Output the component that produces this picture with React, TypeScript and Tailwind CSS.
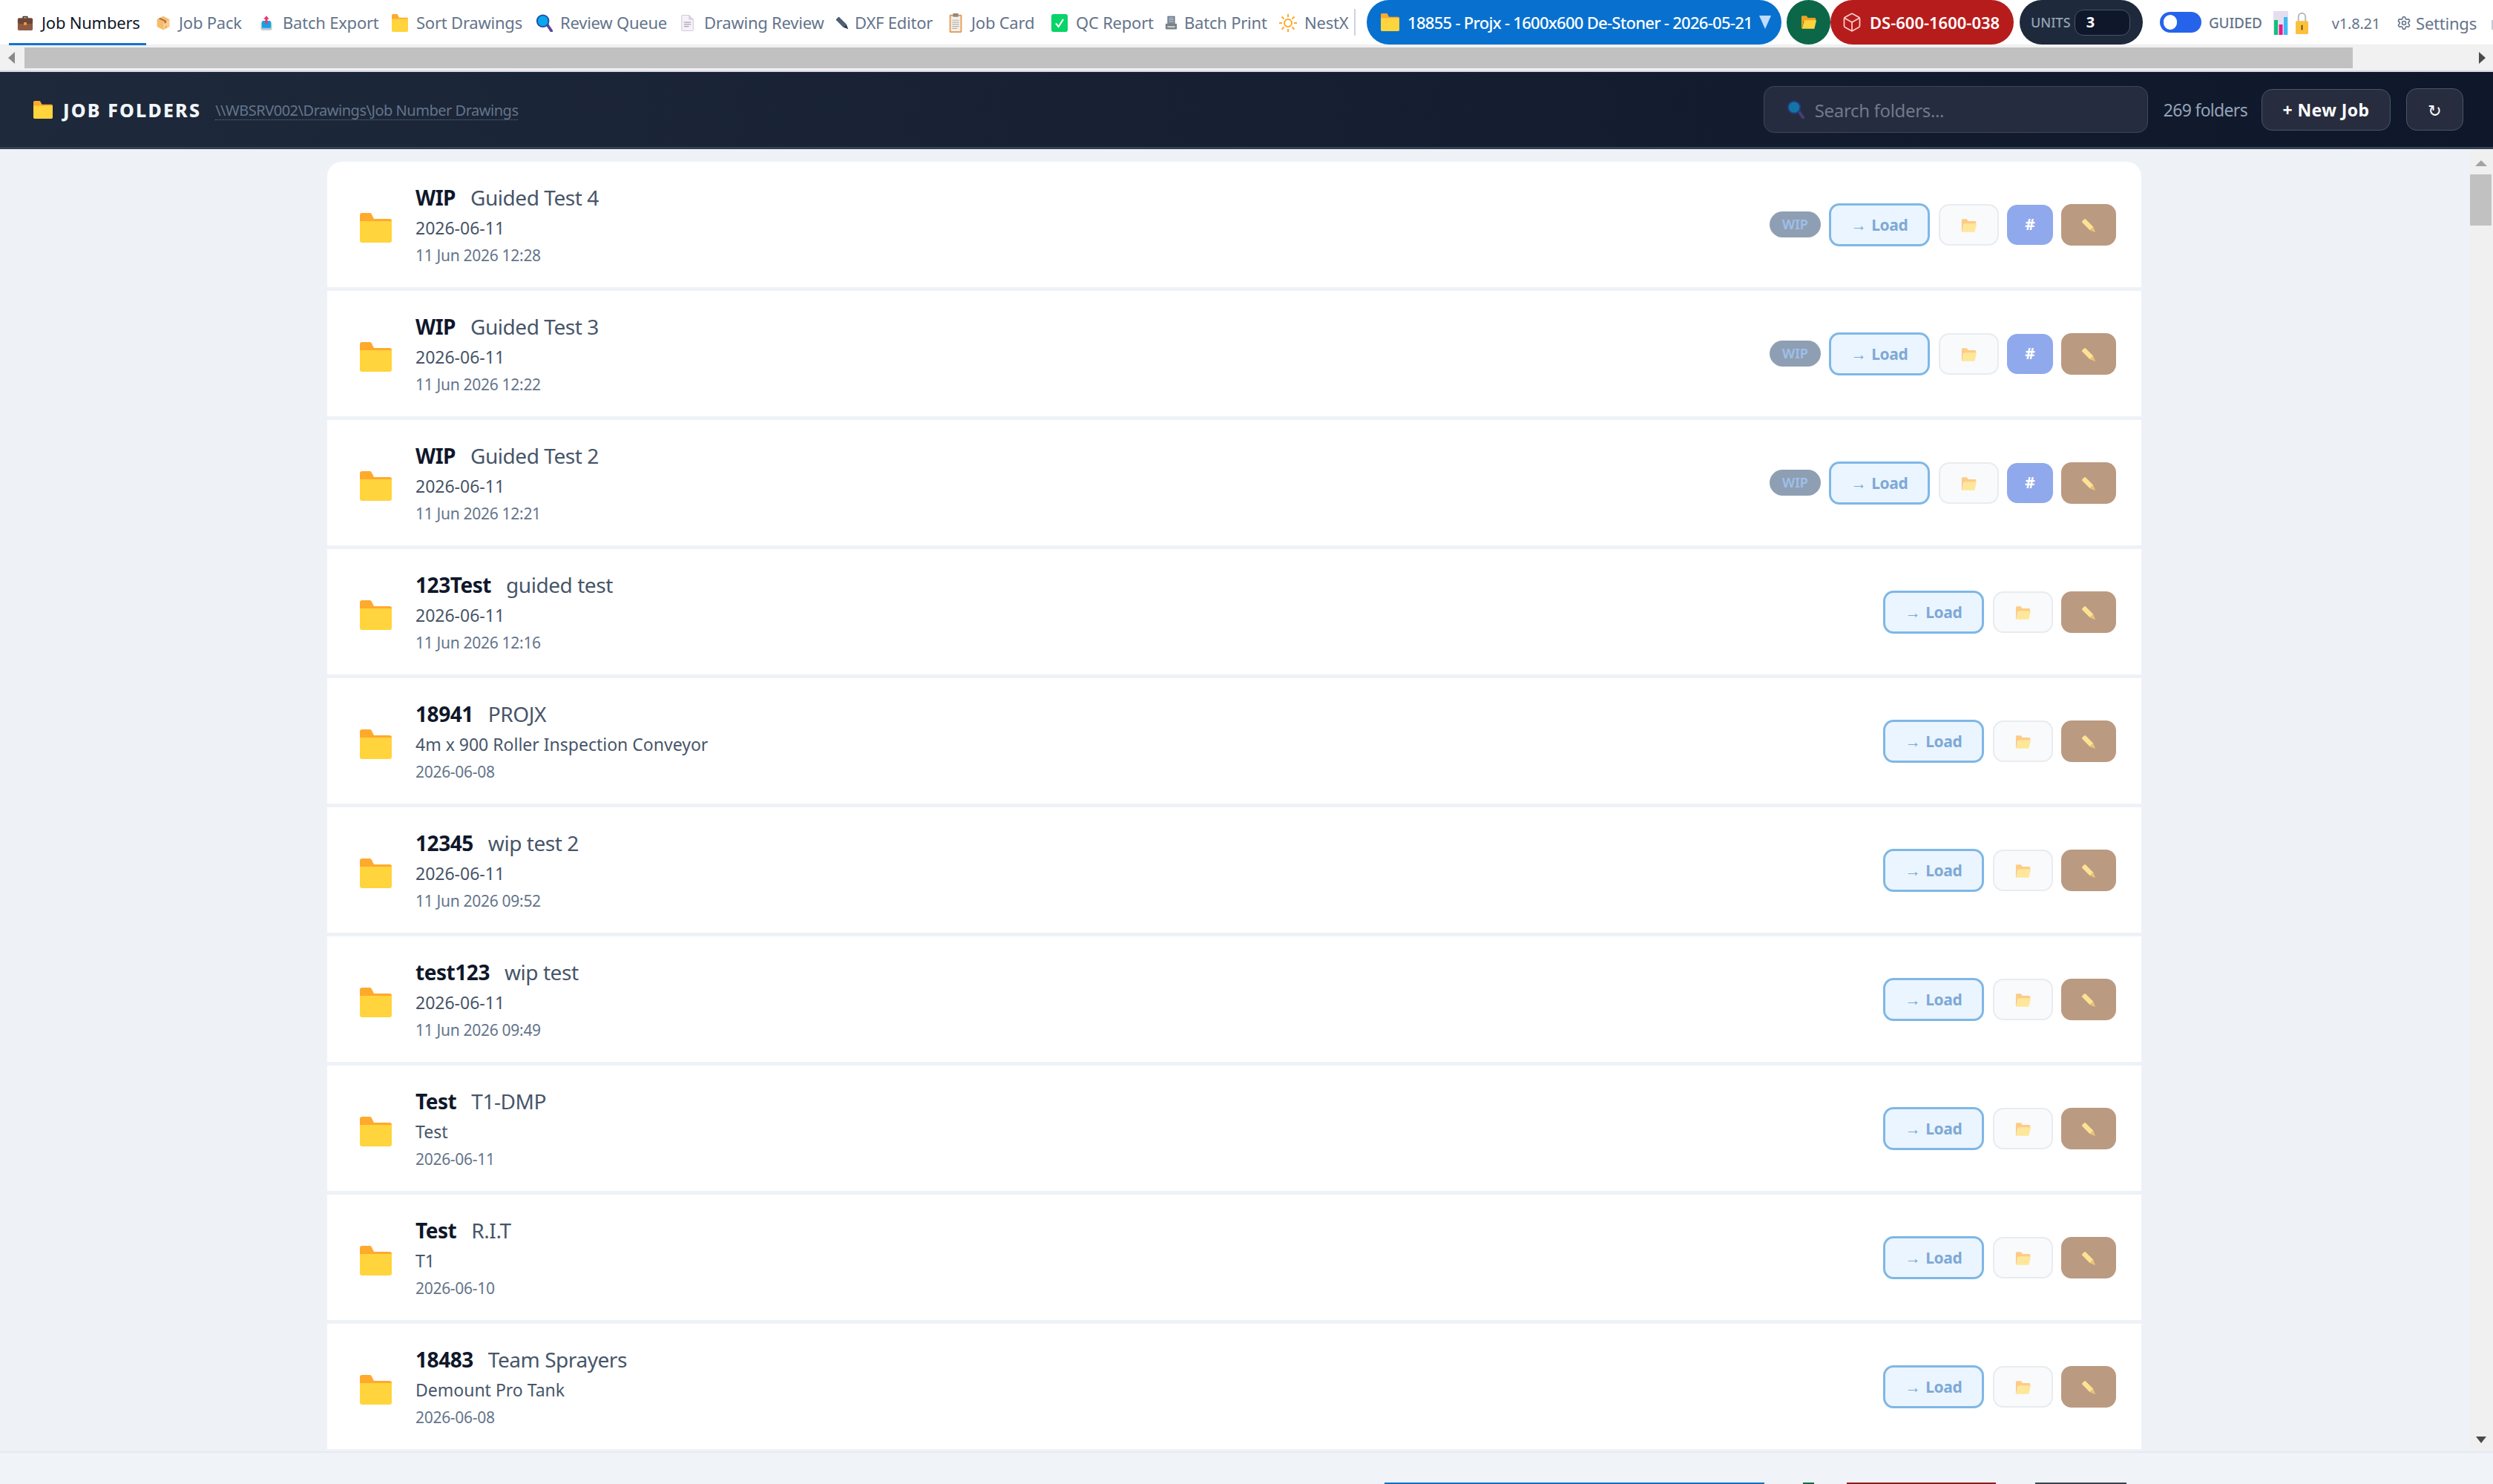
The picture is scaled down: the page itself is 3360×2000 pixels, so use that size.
import React from 'react'
import { Box, Settings } from 'lucide-react'

type IconProps = { className?: string }

const FolderIcon: React.FC<IconProps> = ({ className }) => (
  <svg className={className} viewBox="0 0 43 40" preserveAspectRatio="none">
    <path d="M0 3a3 3 0 0 1 3-3h10a3 3 0 0 1 3 2l3 6h21a3 3 0 0 1 3 3v6H0z" fill="#ffa92d" />
    <path d="M0 11h43v26a3 3 0 0 1-3 3H3a3 3 0 0 1-3-3z" fill="#ffd43d" />
  </svg>
)

const OpenFolderIcon: React.FC<IconProps & { back: string; front: string }> = ({ className, back, front }) => (
  <svg className={className} viewBox="0 0 24 20">
    <path d="M1 2a1.500 1.500 0 0 1 1.500-1.500h6l2 3h10a1.500 1.500 0 0 1 1.500 1.500v3H4L2 19H1z" fill={back} />
    <path d="M5 7h18l-3 12.500H2z" fill={front} />
  </svg>
)

const PencilIcon: React.FC<IconProps & { body: string; tip: string }> = ({ className, body, tip }) => (
  <svg className={className} viewBox="0 0 24 24">
    <path d="M1.500 5 5 1.500a1.500 1.500 0 0 1 2 0L19.500 14 14 19.500 1.500 7a1.500 1.500 0 0 1 0-2z" fill={body} />
    <path d="M14 19.500 19.500 14 23 23z" fill={tip} />
  </svg>
)

const BriefcaseIcon: React.FC<IconProps> = ({ className }) => (
  <svg className={className} viewBox="0 0 24 24">
    <path d="M8 6V3.500A1.500 1.500 0 0 1 9.500 2h5A1.500 1.500 0 0 1 16 3.500V6h-1.800V3.800H9.800V6z" fill="#4a3228" />
    <rect x="1" y="5" width="22" height="18" rx="2" fill="#8d5a44" />
    <rect x="1" y="5" width="22" height="8" rx="2" fill="#6c4636" />
    <rect x="10" y="11" width="4" height="4" fill="#f0a33c" />
  </svg>
)

const PackageIcon: React.FC<IconProps> = ({ className }) => (
  <svg className={className} viewBox="0 0 24 24">
    <path d="M12 1 22 6v12l-10 5-10-5V6z" fill="#f6bb6c" />
    <path d="M12 11v12l10-5V6z" fill="#f9cd8a" />
    <path d="M7 3.500 17 8.500v3l-3 1.500V9.500L4.500 5z" fill="#a9714a" />
    <path d="m15 18 3-1.500V19l-3 1.500z" fill="#e6a45c" />
  </svg>
)

const ExportIcon: React.FC<IconProps> = ({ className }) => (
  <svg className={className} viewBox="0 0 24 28">
    <rect x="2" y="12" width="20" height="15" rx="3" fill="#c0c4ca" />
    <rect x="4" y="10" width="16" height="13" rx="2" fill="#0ea5e9" />
    <path d="M12 1 17 7h-3v9h-4V7H7z" fill="#f0336e" />
  </svg>
)

const SearchEmoji: React.FC<IconProps> = ({ className }) => (
  <svg className={className} viewBox="0 0 24 26">
    <path d="m15 17 3-3 6 9a2 2 0 0 1-3 3z" fill="#5a4a98" />
    <circle cx="10" cy="10" r="9.500" fill="#1f4aa8" />
    <circle cx="10" cy="10" r="7.500" fill="#08a6ec" />
  </svg>
)

const DocIcon: React.FC<IconProps> = ({ className }) => (
  <svg className={className} viewBox="0 0 18 24">
    <path d="M.5 1.500a1 1 0 0 1 1-1h10l6 6v16a1 1 0 0 1-1 1h-15a1 1 0 0 1-1-1z" fill="#f6f1f8" stroke="#cdc3da" />
    <path d="M11.500.5v6h6" fill="#ddd5e6" stroke="#cdc3da" />
    <path d="M4 11h10M4 14h10M4 17h7" stroke="#a9a2b4" strokeWidth="1.200" />
  </svg>
)

const ClipboardIcon: React.FC<IconProps> = ({ className }) => (
  <svg className={className} viewBox="0 0 18 28">
    <rect x="0" y="2" width="18" height="26" rx="1.500" fill="#e59a52" />
    <rect x="2" y="4" width="14" height="22" fill="#f3f0ea" />
    <rect x="5" y="0" width="8" height="5" rx="1" fill="#8d8a86" />
    <path d="M4 10h10M4 13h10M4 16h10M4 19h10M4 22h7" stroke="#b5b1ab" strokeWidth="1.200" />
  </svg>
)

const CheckIcon: React.FC<IconProps> = ({ className }) => (
  <svg className={className} viewBox="0 0 24 24" preserveAspectRatio="none">
    <rect width="24" height="24" rx="3" fill="#08d468" />
    <path d="m6.500 12.500 4 4.500 7-10" fill="none" stroke="#fff" strokeWidth="2.200" />
  </svg>
)

const PrinterIcon: React.FC<IconProps> = ({ className }) => (
  <svg className={className} viewBox="0 0 20 24">
    <rect x="4" y="1" width="12" height="12" fill="#6f7d8d" />
    <path d="M6 4h8M6 7h8M6 10h8" stroke="#d8dde3" strokeWidth="1.200" />
    <rect x="1" y="13" width="18" height="9" rx="1.500" fill="#75838f" />
    <rect x="4" y="17" width="12" height="2" fill="#f1d9b5" />
  </svg>
)

const SunIcon: React.FC<IconProps> = ({ className }) => (
  <svg className={className} viewBox="0 0 24 24" fill="none" stroke="#ffa726" strokeWidth="2">
    <circle cx="12" cy="12" r="5" />
    <path d="M12 0v4M12 20v4M0 12h4M20 12h4M3.500 3.500l3 3M17.500 17.500l3 3M3.500 20.500l3-3M17.500 6.500l3-3" />
  </svg>
)

const BarsIcon: React.FC<IconProps> = ({ className }) => (
  <svg className={className} viewBox="0 0 20 32">
    <rect width="20" height="32" fill="#e4def0" />
    <rect x="1" y="12" width="5" height="20" fill="#10c27a" />
    <rect x="7.500" y="18" width="5" height="14" fill="#ec1a8a" />
    <rect x="14" y="8" width="5" height="24" fill="#38bdf8" />
  </svg>
)

const LockIcon: React.FC<IconProps> = ({ className }) => (
  <svg className={className} viewBox="0 0 18 32">
    <path d="M4 14V7a5 5 0 0 1 10 0v7" fill="none" stroke="#b4b7bd" strokeWidth="2" />
    <rect y="13" width="18" height="19" rx="2" fill="#fdc03a" />
    <rect x="8" y="19" width="2" height="7" fill="#5b4a2a" />
  </svg>
)

const tabs = [
  { label: 'Job Numbers', icon: <BriefcaseIcon className="w-[22px] h-[22px]" />, box: 'w-[185px] pl-[11px]', gap: 'ml-[11px]', active: true },
  { label: 'Job Pack', icon: <PackageIcon className="w-[20px] h-[24px]" />, box: 'w-[145px] pl-[13px]', gap: 'ml-[11px]', active: false },
  { label: 'Batch Export', icon: <ExportIcon className="w-[18px] h-[24px]" />, box: 'w-[178px] pl-[8px]', gap: 'ml-[13px]', active: false },
  { label: 'Sort Drawings', icon: <FolderIcon className="w-[22px] h-[24px]" />, box: 'w-[194px] pl-[8px]', gap: 'ml-[11px]', active: false },
  { label: 'Review Queue', icon: <SearchEmoji className="w-[23px] h-[24px]" />, box: 'w-[196px] pl-[8px]', gap: 'ml-[10px]', active: false },
  { label: 'Drawing Review', icon: <DocIcon className="w-[17px] h-[22px]" />, box: 'w-[208px] pl-[8px]', gap: 'ml-[14px]', active: false },
  { label: 'DXF Editor', icon: <PencilIcon className="w-[18px] h-[20px]" body="#4b5f75" tip="#2f3d4d" />, box: 'w-[153px] pl-[8px]', gap: 'ml-[8px]', active: false },
  { label: 'Job Card', icon: <ClipboardIcon className="w-[18px] h-[26px]" />, box: 'w-[138px] pl-[8px]', gap: 'ml-[12px]', active: false },
  { label: 'QC Report', icon: <CheckIcon className="w-[22px] h-[24px]" />, box: 'w-[153px] pl-[8px]', gap: 'ml-[11px]', active: false },
  { label: 'Batch Print', icon: <PrinterIcon className="w-[17px] h-[22px]" />, box: 'w-[154px] pl-[8px]', gap: 'ml-[9px]', active: false },
  { label: 'NestX', icon: <SunIcon className="w-[24px] h-[24px]" />, box: 'w-[109px] pl-[8px]', gap: 'ml-[10px]', active: false },
]

const rows = [
  { num: 'WIP', name: 'Guided Test 4', line2: '2026-06-11', line3: '11 Jun 2026 12:28', wip: true },
  { num: 'WIP', name: 'Guided Test 3', line2: '2026-06-11', line3: '11 Jun 2026 12:22', wip: true },
  { num: 'WIP', name: 'Guided Test 2', line2: '2026-06-11', line3: '11 Jun 2026 12:21', wip: true },
  { num: '123Test', name: 'guided test', line2: '2026-06-11', line3: '11 Jun 2026 12:16', wip: false },
  { num: '18941', name: 'PROJX', line2: '4m x 900 Roller Inspection Conveyor', line3: '2026-06-08', wip: false },
  { num: '12345', name: 'wip test 2', line2: '2026-06-11', line3: '11 Jun 2026 09:52', wip: false },
  { num: 'test123', name: 'wip test', line2: '2026-06-11', line3: '11 Jun 2026 09:49', wip: false },
  { num: 'Test', name: 'T1-DMP', line2: 'Test', line3: '2026-06-11', wip: false },
  { num: 'Test', name: 'R.I.T', line2: 'T1', line3: '2026-06-10', wip: false },
  { num: '18483', name: 'Team Sprayers', line2: 'Demount Pro Tank', line3: '2026-06-08', wip: false },
]

export default function App() {
  return (
    <div className="w-[3360px] h-[2000px] overflow-hidden flex flex-col bg-[#f0f3f8] font-['Noto_Sans',sans-serif]">
      {/* Tabs */}
      <div className="h-[61px] shrink-0 flex items-start bg-white border-b border-[#eeeeee] pl-[12px] whitespace-nowrap">
        {tabs.map((tab) => (
          <div
            key={tab.label}
            className={`h-[61px] flex items-center shrink-0 text-[22px] tracking-[-0.01em] ${tab.box} ${
              tab.active ? 'text-[#0f172a] border-b-[3px] border-[#0f75cf] pt-[3px]' : 'text-[#64748b]'
            }`}
          >
            {tab.icon}
            <span className={tab.gap}>{tab.label}</span>
          </div>
        ))}
        <div className="w-[2px] h-[36px] mt-[12px] bg-[#cbd5e1] shrink-0" />
        <div className="h-[60px] w-[559px] ml-[15px] shrink-0 rounded-full bg-[#0871cf] flex items-center pl-[19px] text-white text-[22px] font-medium tracking-[-0.032em]">
          <FolderIcon className="w-[25px] h-[24px]" />
          <span className="ml-[11px]">18855 - Projx - 1600x600 De-Stoner - 2026-05-21</span>
          <svg className="ml-[9px] w-[16px] h-[18px] shrink-0" viewBox="0 0 16 18">
            <path d="M0 0h16L8 18z" fill="#bfdbfe" />
          </svg>
        </div>
        <div className="h-[60px] w-[59px] ml-[7px] shrink-0 rounded-full bg-[#0b6748] flex items-center justify-center">
          <OpenFolderIcon className="w-[22px] h-[20px]" back="#f0a020" front="#ffd43d" />
        </div>
        <div className="h-[60px] w-[247px] shrink-0 rounded-full bg-[#b71c1c] flex items-center pl-[15px] text-white text-[22px] font-semibold">
          <Box className="w-[28px] h-[32px] text-[#fecaca]" strokeWidth={1.5} />
          <span className="ml-[10px]">DS-600-1600-038</span>
        </div>
        <div className="h-[60px] w-[166px] ml-[8px] shrink-0 rounded-full bg-[#1e293b] flex items-center pl-[15px]">
          <span className="text-[#94a3b8] text-[18px] font-medium">UNITS</span>
          <div className="ml-[5px] w-[75px] h-[35px] rounded-[12px] bg-[#0f172a] border border-[#475569] flex items-center pl-[15px] text-white text-[20px] font-bold">
            3
          </div>
        </div>
        <div className="ml-[23px] mt-[16px] w-[56px] h-[28px] rounded-full bg-[#2563eb] shrink-0 flex items-center pl-[5px]">
          <div className="w-[18px] h-[20px] rounded-full bg-white" />
        </div>
        <span className="ml-[10px] mt-[17px] text-[19px] font-medium text-[#64748b] tracking-[-0.01em] shrink-0">GUIDED</span>
        <BarsIcon className="ml-[15px] mt-[15px] w-[20px] h-[32px] shrink-0" />
        <LockIcon className="ml-[10px] mt-[15px] w-[17px] h-[32px] shrink-0" />
        <span className="ml-[32px] mt-[17px] text-[20px] text-[#64748b] tracking-[-0.01em] shrink-0">v1.8.21</span>
        <Settings className="ml-[22px] mt-[21px] w-[20px] h-[20px] text-[#64748b] shrink-0" />
        <span className="ml-[6px] mt-[15px] text-[22px] text-[#64748b] tracking-[-0.01em] shrink-0">Settings</span>
        <div className="ml-[20px] mt-[27px] w-[3px] h-[13px] bg-[#c3c7d0] shrink-0" />
      </div>

      {/* Horizontal scrollbar */}
      <div className="h-[34px] shrink-0 bg-[#f1f1f1] flex items-center border-b border-[#eeeeee]">
        <svg className="w-[10px] h-[16px] ml-[11px] shrink-0" viewBox="0 0 10 16">
          <path d="M9 0v16L0 8z" fill="#8a8a8a" />
        </svg>
        <div className="ml-[12px] w-[3138px] h-[28px] bg-[#c1c1c1] shrink-0" />
        <svg className="w-[10px] h-[16px] ml-[169px] shrink-0" viewBox="0 0 10 16">
          <path d="M1 0v16l9-8z" fill="#4a4a4a" />
        </svg>
      </div>
      <div className="h-[2px] shrink-0 bg-[#d6d9e2]" />

      {/* Header */}
      <div className="h-[104px] shrink-0 flex items-center bg-gradient-to-r from-[#1e293b] to-[#0f172a] border-b-[3px] border-[#334155] pl-[45px] pr-[40px]">
        <FolderIcon className="w-[26px] h-[24px]" />
        <span className="ml-[14px] mt-[2px] text-[25px] font-extrabold tracking-[0.087em] text-[#f1f5f9]">JOB FOLDERS</span>
        <span className="ml-[19px] mt-[2px] text-[20px] tracking-[-0.024em] text-[#64748b] border-b border-dotted border-[#64748b] leading-[25px]">
          {'\\\\WBSRV002\\Drawings\\Job Number Drawings'}
        </span>
        <div className="ml-auto w-[518px] h-[63px] rounded-[14px] bg-[#262c3f] border border-[#3d4657] flex items-center pl-[30px] shrink-0">
          <SearchEmoji className="w-[24px] h-[25px] opacity-60" />
          <span className="ml-[14px] mt-[2px] text-[24px] tracking-[-0.014em] text-[#71798a]">Search folders...</span>
        </div>
        <span className="ml-[21px] mt-[2px] text-[23px] tracking-[-0.03em] text-[#94a3b8] shrink-0">269 folders</span>
        <div className="ml-[19px] w-[174px] h-[56px] rounded-[14px] bg-[#272d3f] border border-[#475569] flex items-center justify-center pt-[2px] text-white text-[23px] font-bold tracking-[0.017em] shrink-0">
          + New Job
        </div>
        <div className="ml-[21px] w-[77px] h-[57px] rounded-[14px] bg-[#272d3f] border border-[#475569] flex items-center justify-center pt-[3px] text-white text-[22px] shrink-0 font-['DejaVu_Sans',sans-serif]">
          ↻
        </div>
      </div>

      {/* Folder list */}
      <div className="h-[1755px] shrink-0 flex overflow-hidden bg-[#eef2f7]">
        <div className="w-[3329px] shrink-0 pl-[441px] pt-[17px] flex flex-col gap-[5px]">
          {rows.map((row, index) => (
            <div
              key={row.num + row.name}
              className={`w-[2445px] h-[169px] shrink-0 flex items-center bg-white pl-[44px] pr-[34px] ${
                index === 0 ? 'rounded-t-[20px]' : ''
              }`}
            >
              <FolderIcon className="w-[43px] h-[40px] mt-[8px] shrink-0" />
              <div className="ml-[32px] flex flex-col mt-[2px]">
                <div className="flex items-baseline h-[41px] tracking-[-0.028em]">
                  <span className="text-[28px] font-bold text-[#0f172a]">{row.num}</span>
                  <span className="ml-[20px] text-[28px] text-[#475569]">{row.name}</span>
                </div>
                <span className="text-[23px] h-[39px] leading-[42px] text-[#475569]">{row.line2}</span>
                <span className="text-[21px] h-[37px] leading-[38px] tracking-[-0.014em] text-[#64748b]">{row.line3}</span>
              </div>
              <div className="ml-auto flex items-center">
                {row.wip && (
                  <div className="w-[69px] h-[35px] rounded-full bg-[#8f9fb3] text-[#9fc0ec] text-[18px] font-semibold flex items-center justify-center mr-[11px]">
                    WIP
                  </div>
                )}
                <div className="w-[136px] h-[58px] rounded-[14px] bg-[#ebf5ff] border-[3px] border-[#7fb7e6] flex items-center justify-center pt-[2px] text-[#7ea9d6] text-[21px] font-bold tracking-[-0.02em]">
                  <span className="font-normal mr-[7px]">→</span>Load
                </div>
                <div className="ml-[12px] w-[81px] h-[56px] rounded-[14px] bg-[#f8fafc] border-2 border-[#e8ecf0] flex items-center justify-center pt-[3px]">
                  <OpenFolderIcon className="w-[22px] h-[20px]" back="#fecb86" front="#fee799" />
                </div>
                {row.wip && (
                  <div className="ml-[11px] w-[62px] h-[54px] rounded-[14px] bg-[#90a9ec] flex items-center justify-center text-white text-[21px] font-bold">
                    #
                  </div>
                )}
                <div className="ml-[11px] w-[74px] h-[56px] rounded-[14px] bg-[#bb9a82] flex items-center justify-center pt-[2px]">
                  <PencilIcon className="w-[20px] h-[20px]" body="#fde293" tip="#e8c474" />
                </div>
              </div>
            </div>
          ))}
        </div>
        <div className="w-[31px] shrink-0 bg-[#f0f0f0] flex flex-col pr-[2px] items-center">
          <svg className="w-[16px] h-[8px] mt-[15px] shrink-0" viewBox="0 0 16 8">
            <path d="M8 0l8 8H0z" fill="#a3a3a3" />
          </svg>
          <div className="w-[29px] h-[69px] mt-[11px] bg-[#c1c1c1] shrink-0" />
          <svg className="w-[14px] h-[9px] mt-auto mb-[11px] shrink-0" viewBox="0 0 14 9">
            <path d="M0 0h14L7 9z" fill="#4a4a4a" />
          </svg>
        </div>
      </div>

      {/* Bottom strip, next bar just peeking in */}
      <div className="flex-1 flex items-end border-t-2 border-[#e6e9f0] bg-[#f0f3f8]">
        <div className="ml-[1866px] w-[512px] h-[2px] bg-[#1170c4]" />
        <div className="ml-[52px] w-[15px] h-[2px] bg-[#0f6b4a]" />
        <div className="ml-[44px] w-[201px] h-[2px] bg-[#8f1c1c]" />
        <div className="ml-[53px] w-[123px] h-[2px] bg-[#3a4450]" />
      </div>
    </div>
  )
}
